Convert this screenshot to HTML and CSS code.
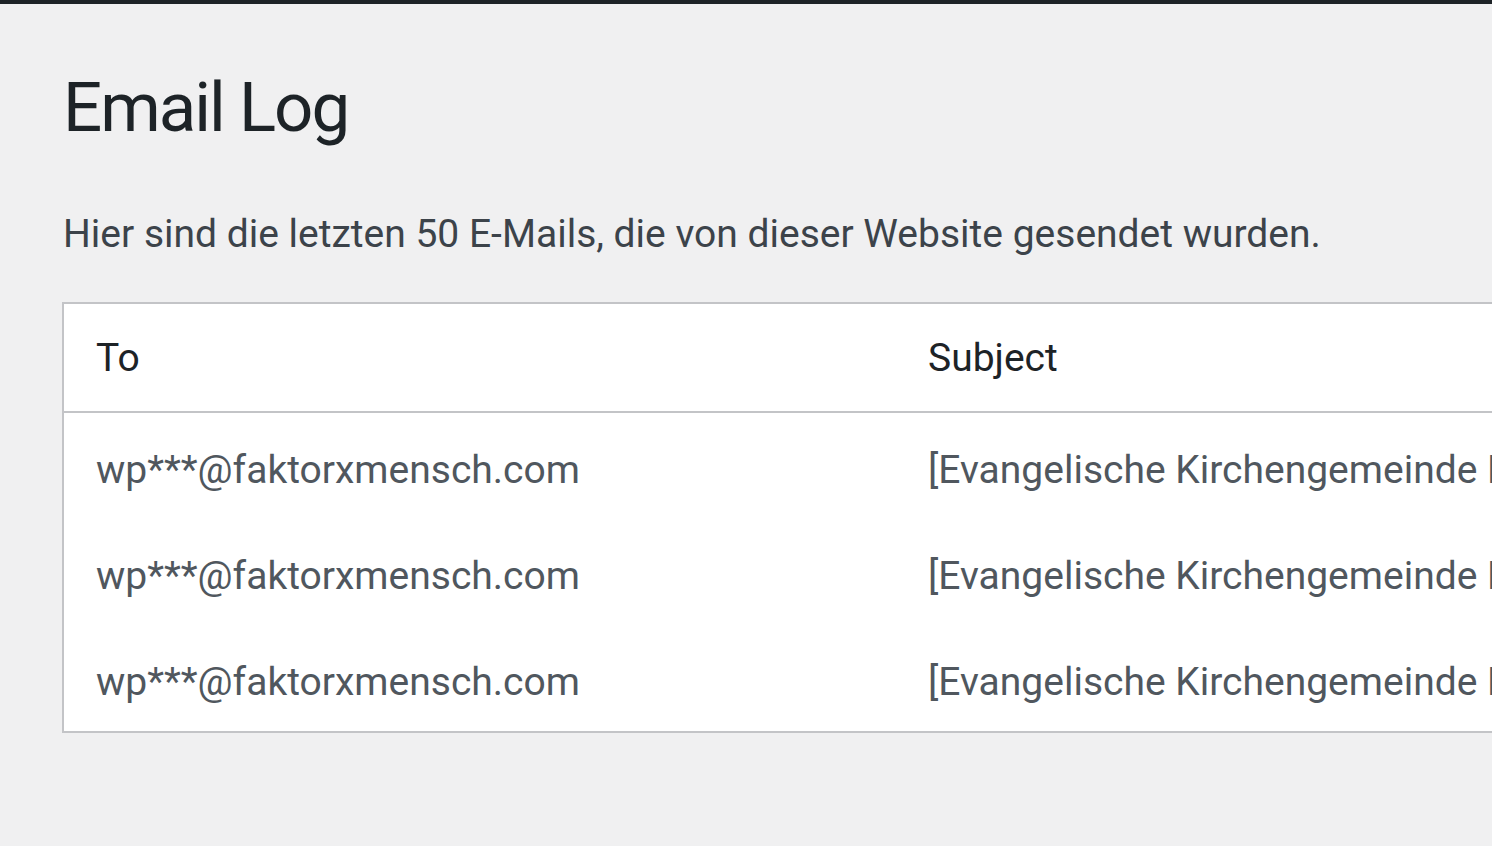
FILE: index.html
```html
<!DOCTYPE html>
<html lang="de">
<head>
<meta charset="utf-8">
<title>Email Log</title>
<link rel="stylesheet" href="styles.css">
</head>
<body>
<div class="adminbar"></div>
<div class="wrap">
  <h1 class="title">Email Log</h1>
  <p class="intro">Hier sind die letzten 50 E-Mails, die von dieser Website gesendet wurden.</p>
  <table class="log">
    <thead>
      <tr><th class="col-to">To</th><th class="col-subject">Subject</th></tr>
    </thead>
    <tbody>
      <tr><td>wp***@faktorxmensch.com</td><td>[Evangelische Kirchengemeinde Hamburg]</td></tr>
      <tr><td>wp***@faktorxmensch.com</td><td>[Evangelische Kirchengemeinde Hamburg]</td></tr>
      <tr><td>wp***@faktorxmensch.com</td><td>[Evangelische Kirchengemeinde Hamburg]</td></tr>
    </tbody>
  </table>
</div>
</body>
</html>
```

FILE: styles.css
```css
html, body {
  margin: 0;
  padding: 0;
  background: #f0f0f1;
  overflow: hidden;
  width: 1492px;
  height: 846px;
}

body {
  font-family: Roboto, "Noto Sans", sans-serif;
  color: #3c434a;
}

.adminbar {
  height: 4px;
  background: #1d2327;
}

.wrap {
  padding-left: 62px;
}

.title {
  margin: 59px 0 0 1px;
  font-size: 69px;
  font-weight: 400;
  line-height: 90px;
  letter-spacing: -2px;
  color: #1d2327;
}

.intro {
  margin: 52px 0 0 1px;
  font-size: 39px;
  line-height: 58.5px;
  color: #3c434a;
}

.log {
  margin-top: 38px;
  border-collapse: separate;
  border-spacing: 0;
  border: 2px solid #c3c4c7;
  background: #fff;
  width: 2400px;
  table-layout: fixed;
}

.col-to {
  width: 768px;
}

.log th,
.log td {
  text-align: left;
  font-size: 39px;
  line-height: 58px;
  white-space: nowrap;
  overflow: hidden;
}

.log th {
  padding: 25px 32px 24px;
  font-weight: 400;
  color: #1d2327;
  border-bottom: 2px solid #c3c4c7;
}

.log td {
  padding: 28px 32px 20px;
  color: #50575e;
}
```
